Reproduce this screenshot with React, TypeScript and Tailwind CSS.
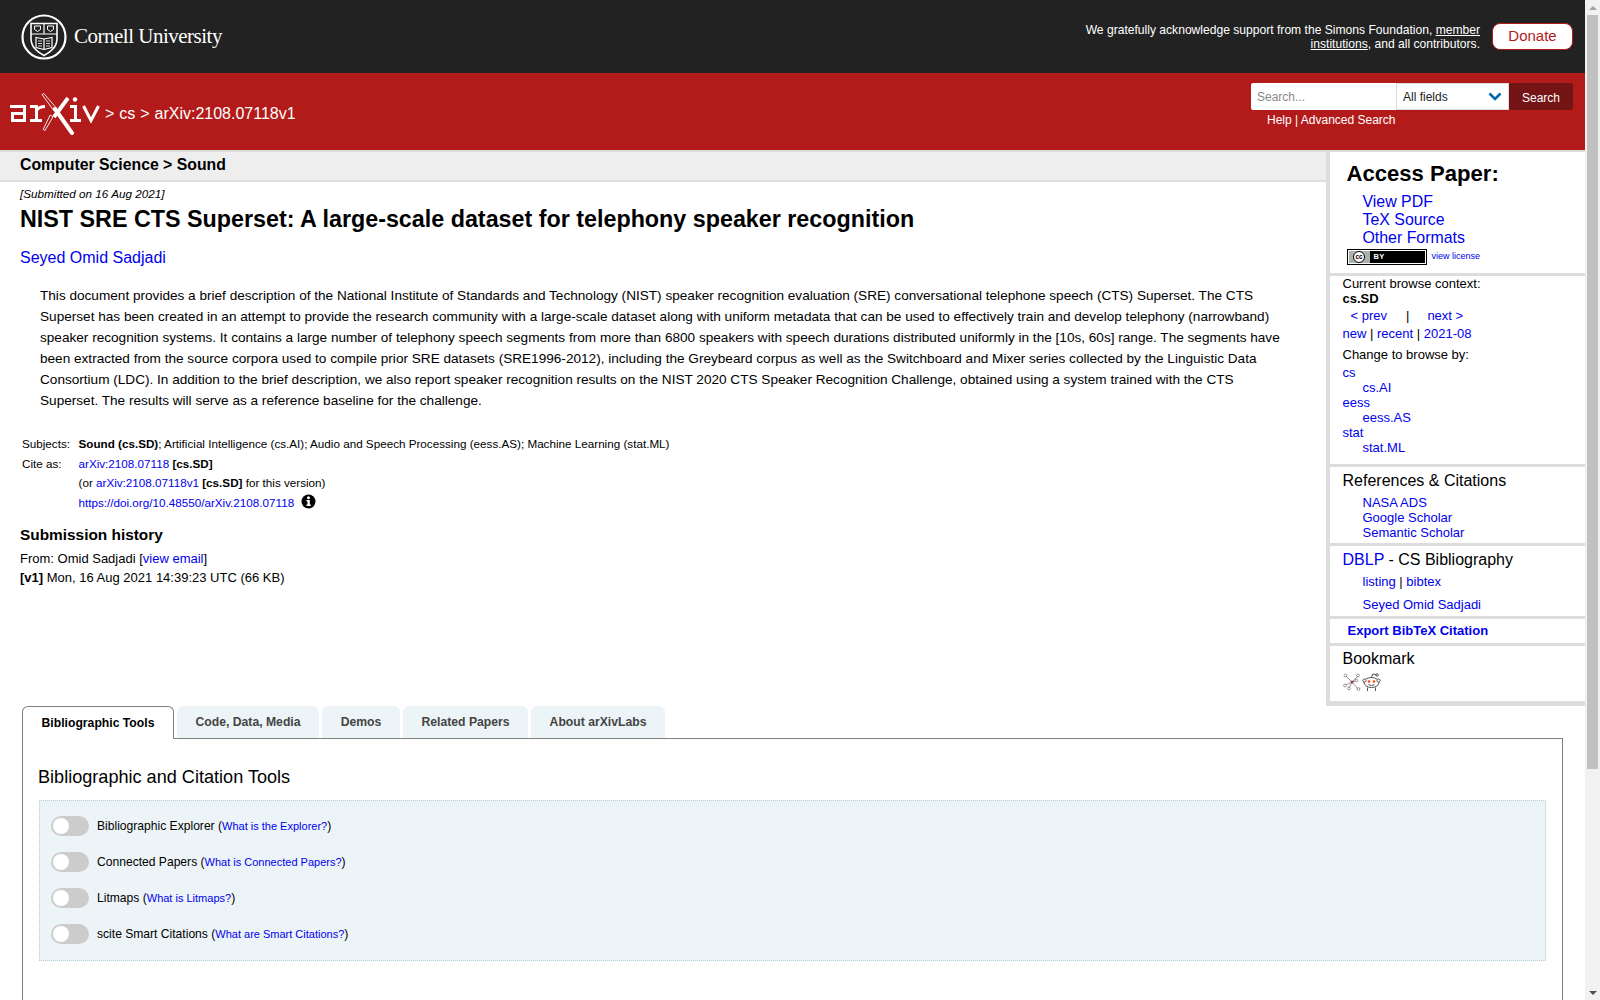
const SANS = "font-['Liberation_Sans',Arial,sans-serif]";
const LINK = "text-[#0000ee]";

function CornellSeal() {
  return (
    <svg width="46" height="46" viewBox="0 0 46 46" fill="none" stroke="#fff">
      <circle cx="23" cy="23" r="21.500" strokeWidth="2.200" />
      <path d="M10 9.500h26v15c0 8-5 12.500-13 17-8-4.500-13-9-13-17z" strokeWidth="1.600" />
      <path d="M10 20h26M23 9.500V20" strokeWidth="1.200" />
      <path d="M13.500 12h6v3.500l-3 2-3-2zM26.500 12h6v3.500l-3 2-3-2z" strokeWidth="1" />
      <path d="M15 23.500l8 1.500 8-1.500v10l-8 2-8-2zM23 25v10.500" strokeWidth="1.200" />
      <path d="M17 27h4M17 29.500h4M17 32h4M25 27h4M25 29.500h4M25 32h4" strokeWidth="0.800" />
    </svg>
  );
}

function ArxivLogo() {
  return (
    <svg width="92" height="44" viewBox="0 0 92 44" fill="none" stroke="#fff" className="shrink-0">
      {/* a */}
      <path d="M2 15.500H16.500V29.500H4.500V22.500H16.500" strokeWidth="3" />
      {/* r */}
      <path d="M22 29.500h12M22 15.500h6.500M28.500 14V29.500M28.500 19.500c2-3 4-4 8.500-4" strokeWidth="3" />
      {/* X outlined halves */}
      <path d="M34 3.500l1.800-1 12.500 14.500-2.500 2.500zM45 26l-8 13.500-1.800-1 7-14.500z" strokeWidth="0.900" />
      {/* X solid strokes */}
      <path d="M47 18l17 24" strokeWidth="4" strokeLinecap="round" />
      <path d="M60 7L46 26" strokeWidth="3.800" />
      {/* i */}
      <circle cx="67" cy="8.500" r="2.200" fill="#fff" stroke="none" />
      <path d="M62 15.500h5.500v14M62 29.500h11" strokeWidth="3" />
      {/* v */}
      <path d="M75.500 15l7.500 14.500 7.500-14.500" strokeWidth="3" />
    </svg>
  );
}

function CcBadge() {
  return (
    <span className="flex w-[80px] h-[16px] border-[1.500px] border-black p-[1px] bg-white">
      <span className="flex items-center justify-center w-[21px] bg-[#aab2ab]">
        <span className="flex items-center justify-center w-[12px] h-[12px] rounded-full bg-white border border-black text-[6.500px] font-bold leading-none text-black">
          cc
        </span>
      </span>
      <span className="flex flex-1 items-center pl-[4px] bg-black text-[7.500px] font-bold leading-none text-white tracking-wider">BY</span>
    </span>
  );
}

function ScienceWiseIcon() {
  return (
    <svg width="18" height="18" viewBox="0 0 18 18" fill="none" stroke="#8a8a8a" strokeWidth="0.900">
      <path d="M9 9L3 3M9 9L15 3M9 9L3 12M9 9L15 16M9 9L6 15M9 9L13 8" />
      <circle cx="2.500" cy="2.500" r="1.400" />
      <circle cx="15" cy="2.500" r="1.400" />
      <circle cx="2" cy="12.500" r="1.400" />
      <circle cx="6" cy="15.500" r="1.400" />
      <circle cx="15.500" cy="16" r="1.400" />
      <circle cx="13.500" cy="7.500" r="1.400" />
      <circle cx="9" cy="9" r="1.500" fill="#a0305a" stroke="none" />
    </svg>
  );
}

function RedditIcon() {
  return (
    <svg width="19" height="19" viewBox="0 0 19 19" fill="none" stroke="#555" strokeWidth="1">
      <ellipse cx="9.500" cy="9.500" rx="7.500" ry="5" fill="#fff" />
      <circle cx="2.500" cy="7.500" r="1.600" fill="#fff" />
      <circle cx="16.500" cy="7.500" r="1.600" fill="#fff" />
      <path d="M9.500 4.500l1.200-3.500 3.500.8" />
      <circle cx="15" cy="2" r="1.200" />
      <circle cx="7" cy="8.500" r="1.300" fill="#ff4500" stroke="none" />
      <circle cx="12" cy="8.500" r="1.300" fill="#ff4500" stroke="none" />
      <path d="M6.500 11.500c2 1.200 4 1.200 6 0M5.500 14.500v3.500M13.500 14.500v3.500" />
    </svg>
  );
}

function Toggle({ label, link }: { label: string; link: string }) {
  return (
    <div className="flex items-center h-[36px]">
      <span className="flex items-center w-[38px] h-[20px] rounded-full bg-[#cccccc] px-[2px] shrink-0">
        <span className="w-[16px] h-[16px] rounded-full bg-white" />
      </span>
      <span className="ml-[8px] text-[12.100px] text-black">
        {label} (<a className={`text-[11px] ${LINK}`}>{link}</a>)
      </span>
    </div>
  );
}

function Box({ children, className = "" }: { children: React.ReactNode; className?: string }) {
  return <div className={`bg-white border-b-[3px] border-[#dddddd] ${className}`}>{children}</div>;
}

const TABS = [
  { label: "Code, Data, Media", width: "w-[142px]" },
  { label: "Demos", width: "w-[78px]" },
  { label: "Related Papers", width: "w-[125px]" },
  { label: "About arXivLabs", width: "w-[134px]" },
];

const TOOLS = [
  { label: "Bibliographic Explorer", link: "What is the Explorer?" },
  { label: "Connected Papers", link: "What is Connected Papers?" },
  { label: "Litmaps", link: "What is Litmaps?" },
  { label: "scite Smart Citations", link: "What are Smart Citations?" },
];

export default function App() {
  return (
    <div className={`flex h-screen overflow-hidden bg-white text-black ${SANS}`}>
      <div className="flex-1 min-w-0 flex flex-col overflow-hidden">
        {/* cornell bar */}
        <div className="flex items-center justify-between h-[73px] bg-[#222222] shrink-0 pl-[21px] pr-[12px]">
          <div className="flex items-center gap-[7px] text-white">
            <CornellSeal />
            <span className="font-['Liberation_Serif',serif] text-[21px] tracking-[-0.500px] mt-[1px]">Cornell University</span>
          </div>
          <div className="flex items-center">
            <p className="w-[420px] text-right text-[12.100px] leading-[14px] text-white">
              We gratefully acknowledge support from the Simons Foundation, <span className="underline">member institutions</span>, and all contributors.
            </p>
            <span className="ml-[12px] flex items-center justify-center w-[81px] h-[27px] rounded-[8px] bg-white border border-[#b31b1b] text-[15px] text-[#b31b1b]">
              Donate
            </span>
          </div>
        </div>

        {/* red bar */}
        <div className="flex justify-between h-[77px] bg-[#b31b1b] shrink-0 pl-[8px] pr-[12px]">
          <div className="flex items-center pt-[3px] text-white">
            <ArxivLogo />
            <span className="ml-[5px] text-[16px] mt-[1px] [word-spacing:0.500px]">&gt; cs &gt; arXiv:2108.07118v1</span>
          </div>
          <div className="pt-[10px]">
            <div className="flex h-[27px]">
              <span className="flex items-center w-[145px] pl-[6px] bg-white rounded-l-[2px] text-[12px] text-[#8a8a8a]">Search...</span>
              <span className="flex items-center justify-between w-[113px] pl-[6px] pr-[6px] bg-white border border-[#dbdbdb] text-[12px] text-[#222222]">
                All fields
                <svg width="14" height="9" viewBox="0 0 14 9" fill="none" stroke="#0068ac" strokeWidth="2.600">
                  <path d="M1.500 1.500l5.500 5.500 5.500-5.500" />
                </svg>
              </span>
              <span className="flex items-center justify-center w-[64px] bg-[#751414] rounded-r-[2px] text-[12px] text-white pt-[2px]">Search</span>
            </div>
            <div className="mt-[3px] pl-[16px] text-[12px] leading-[14px] text-white">Help | Advanced Search</div>
          </div>
        </div>

        {/* article + sidebar */}
        <div className="flex h-[556px] shrink-0 border-t-2 border-[#dddddd]">
          <div className="flex-1 min-w-0">
            <div className="flex items-center h-[30px] bg-[#eeeeee] border-b-2 border-[#dddddd] pl-[20px] pb-[2px] text-[15.800px] font-bold">
              Computer Science &gt; Sound
            </div>
            <div className="pl-[20px] pr-[40px]">
              <div className="pt-[5px] text-[11.700px] leading-[14px] italic">[Submitted on 16 Aug 2021]</div>
              <h1 className="mt-[4px] text-[23.300px] leading-[28px] font-bold">NIST SRE CTS Superset: A large-scale dataset for telephony speaker recognition</h1>
              <div className={`mt-[15px] text-[16px] leading-[20px] ${LINK}`}>Seyed Omid Sadjadi</div>
              <p className="mt-[17px] ml-[20px] mr-[5px] text-[13.600px] leading-[21px]">
                This document provides a brief description of the National Institute of Standards and Technology (NIST) speaker recognition evaluation (SRE) conversational telephone speech (CTS) Superset. The CTS Superset has been created in an attempt to provide the research community with a large-scale dataset along with uniform metadata that can be used to effectively train and develop telephony (narrowband) speaker recognition systems. It contains a large number of telephony speech segments from more than 6800 speakers with speech durations distributed uniformly in the [10s, 60s] range. The segments have been extracted from the source corpora used to compile prior SRE datasets (SRE1996-2012), including the Greybeard corpus as well as the Switchboard and Mixer series collected by the Linguistic Data Consortium (LDC). In addition to the brief description, we also report speaker recognition results on the NIST 2020 CTS Speaker Recognition Challenge, obtained using a system trained with the CTS Superset. The results will serve as a reference baseline for the challenge.
              </p>
              <div className="mt-[23px] ml-[2px] grid grid-cols-[56.500px_1fr] text-[11.680px] leading-[19.500px]">
                <span>Subjects:</span>
                <span>
                  <b>Sound (cs.SD)</b>; Artificial Intelligence (cs.AI); Audio and Speech Processing (eess.AS); Machine Learning (stat.ML)
                </span>
                <span>Cite as:</span>
                <span>
                  <a className={LINK}>arXiv:2108.07118</a> <b>[cs.SD]</b>
                </span>
                <span />
                <span>
                  (or <a className={LINK}>arXiv:2108.07118v1</a> <b>[cs.SD]</b> for this version)
                </span>
                <span />
                <span className="flex items-center">
                  <a className={LINK}>https://doi.org/10.48550/arXiv.2108.07118</a>
                  <svg width="15" height="15" viewBox="0 0 15 15" className="ml-[7px] -mt-[2px]">
                    <circle cx="7.500" cy="7.500" r="7" fill="#000" />
                    <circle cx="7.500" cy="3.800" r="1.500" fill="#fff" />
                    <path d="M5.500 6h3.300v4.500h1v1.500H5.500v-1.500h1V7.500h-1z" fill="#fff" />
                  </svg>
                </span>
              </div>
              <h2 className="mt-[13px] text-[15.400px] leading-[20px] font-bold">Submission history</h2>
              <div className="mt-[4px] text-[13px] leading-[19px]">
                From: Omid Sadjadi [<a className={LINK}>view email</a>]
                <br />
                <b>[v1]</b> Mon, 16 Aug 2021 14:39:23 UTC (66 KB)
              </div>
            </div>
          </div>

          {/* sidebar */}
          <aside className="w-[259px] shrink-0 bg-[#dddddd] pl-[4px] pb-[5px]">
            <Box className="h-[124px] pl-[16.500px] pt-[9px]">
              <div className="text-[22.100px] leading-[26px] font-bold">Access Paper:</div>
              <div className={`mt-[6px] pl-[16px] text-[15.900px] leading-[18px] ${LINK}`}>
                <div>View PDF</div>
                <div>TeX Source</div>
                <div>Other Formats</div>
              </div>
              <div className="mt-[2px] flex items-center gap-[5px]">
                <CcBadge />
                <a className={`text-[9px] ${LINK}`}>view license</a>
              </div>
            </Box>
            <Box className="h-[191px] pl-[12.500px] text-[13px] leading-[15px]">
              <div>Current browse context:</div>
              <div className="font-bold">cs.SD</div>
              <div className="mt-[2px] pl-[8px]">
                <a className={LINK}>&lt; prev</a>
                <span className="ml-[19px]">|</span>
                <a className={`ml-[18px] ${LINK}`}>next &gt;</a>
              </div>
              <div className="mt-[3px]">
                <a className={LINK}>new</a> | <a className={LINK}>recent</a> | <a className={LINK}>2021-08</a>
              </div>
              <div className="mt-[6px]">Change to browse by:</div>
              <div className={`mt-[3px] ${LINK}`}>
                <div>cs</div>
                <div className="pl-[20px]">cs.AI</div>
                <div>eess</div>
                <div className="pl-[20px]">eess.AS</div>
                <div>stat</div>
                <div className="pl-[20px]">stat.ML</div>
              </div>
            </Box>
            <Box className="h-[79px] pl-[12.500px] pt-[4px] text-[13px] leading-[15px]">
              <div className="text-[16px] leading-[20px]">References &amp; Citations</div>
              <div className={`mt-[4px] pl-[20px] ${LINK}`}>
                <div>NASA ADS</div>
                <div>Google Scholar</div>
                <div>Semantic Scholar</div>
              </div>
            </Box>
            <Box className="h-[73px] pl-[12.500px] pt-[4px] text-[13px] leading-[15px]">
              <div className="text-[16px] leading-[20px]">
                <a className={LINK}>DBLP</a> - CS Bibliography
              </div>
              <div className="mt-[4px] pl-[20px]">
                <a className={LINK}>listing</a> | <a className={LINK}>bibtex</a>
              </div>
              <div className={`mt-[8px] pl-[20px] ${LINK}`}>Seyed Omid Sadjadi</div>
            </Box>
            <Box className={`h-[27px] pl-[17.500px] pt-[4px] text-[13px] leading-[15px] font-bold ${LINK}`}>Export BibTeX Citation</Box>
            <div className="h-[55px] bg-white pl-[12.500px] pt-[3px]">
              <div className="text-[16px] leading-[20px]">Bookmark</div>
              <div className="mt-[4px] flex gap-[1px]">
                <ScienceWiseIcon />
                <RedditIcon />
              </div>
            </div>
          </aside>
        </div>

        {/* labs tabs */}
        <div className="flex-1 pl-[22px] pr-[22px] min-h-0">
          <div className="flex h-[32px] gap-[3px]">
            <div className="relative z-10 flex items-center justify-center w-[152px] h-[33px] bg-white border border-b-0 border-[#808080] rounded-t-[6px] text-[12.200px] font-bold">
              Bibliographic Tools
            </div>
            {TABS.map((tab) => (
              <div key={tab.label} className={`flex items-center justify-center h-[32px] bg-[#edf4f7] rounded-t-[6px] text-[12.200px] font-bold text-[#444444] ${tab.width}`}>
                {tab.label}
              </div>
            ))}
          </div>
          <div className="h-[300px] border border-[#808080] px-[16px]">
            <h2 className="-ml-[1px] pt-[28px] text-[18.100px] leading-[21px]">Bibliographic and Citation Tools</h2>
            <div className="mt-[12px] h-[161px] border border-dotted border-[#b5cbd6] bg-[#edf4f7] pl-[11px] pt-[7px]">
              {TOOLS.map((tool) => (
                <Toggle key={tool.label} label={tool.label} link={tool.link} />
              ))}
            </div>
          </div>
        </div>
      </div>

      {/* scrollbar */}
      <div className="w-[15px] shrink-0 bg-[#f1f1f1] flex flex-col items-center">
        <div className="flex items-center justify-center h-[15px] w-full">
          <span className="border-x-[4px] border-b-[4px] border-x-transparent border-b-[#a3a3a3]" />
        </div>
        <div className="w-[11px] h-[754px] bg-[#c1c1c1]" />
        <div className="mt-auto flex items-center justify-center h-[15px] w-full">
          <span className="border-x-[4px] border-t-[4px] border-x-transparent border-t-[#505050]" />
        </div>
      </div>
    </div>
  );
}
